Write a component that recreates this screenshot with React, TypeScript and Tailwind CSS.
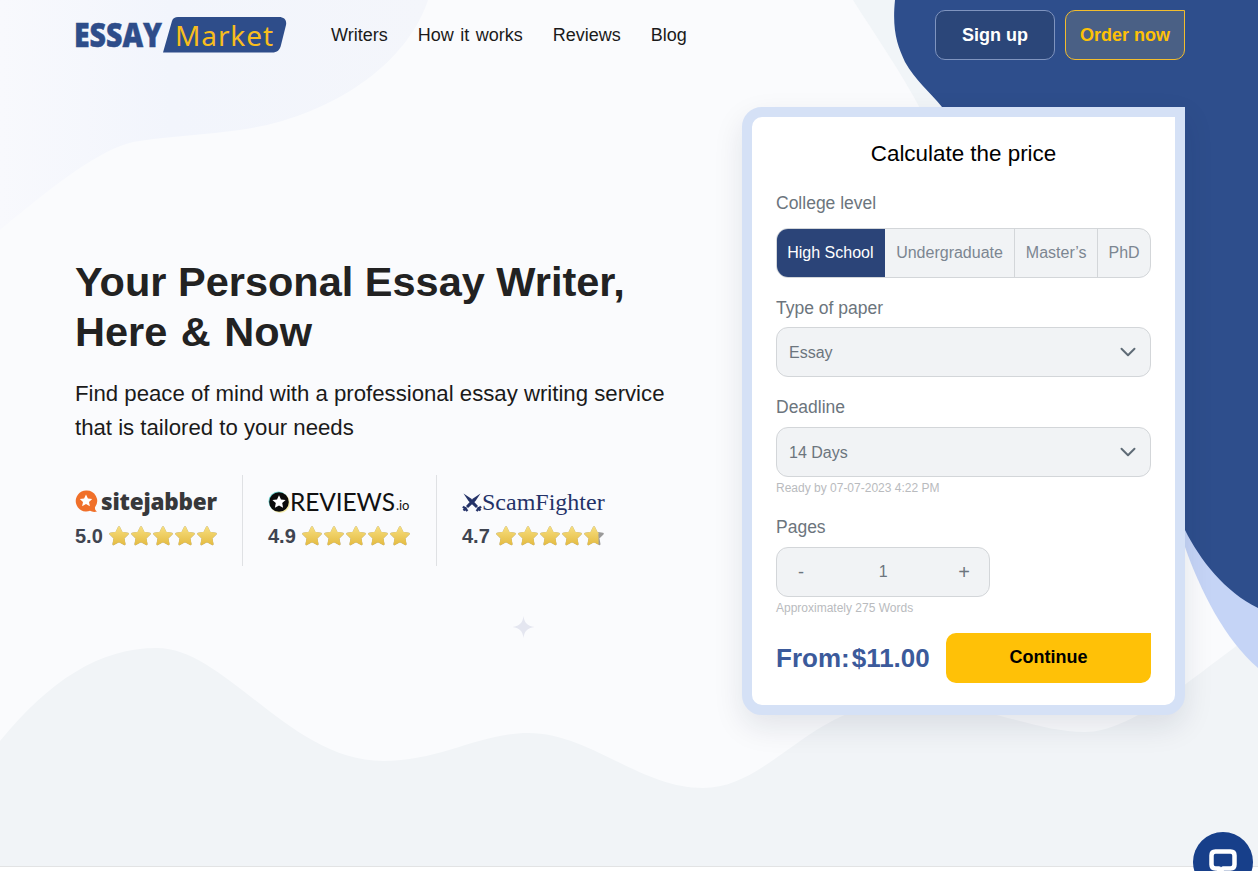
/** Essay Market landing hero with the price calculator card. */
import { useId } from 'react';
import { ChevronDown } from 'lucide-react';

const NAV_LINKS = ['Writers', 'How it works', 'Reviews', 'Blog'];

const LEVELS = [
  { label: 'High School', width: 'w-[109px]', active: true },
  { label: 'Undergraduate', width: 'w-[130px]', active: false },
  { label: 'Master’s', width: 'w-[83px]', active: false },
  { label: 'PhD', width: 'w-[53px]', active: false },
];

function HeroBackground() {
  return (
    <svg className="absolute inset-0" width="1258" height="866" viewBox="0 0 1258 866" fill="none">
      <defs>
        <linearGradient id="corner" x1="0" y1="0" x2="1" y2="0">
          <stop offset="0" stopColor="#f8f9fd" />
          <stop offset="0.4" stopColor="#f2f5fc" />
          <stop offset="1" stopColor="#f4f6fb" />
        </linearGradient>
      </defs>
      <path d="M0 0H428C410 55 350 105 267 125C220 135 170 135 133 142C100 150 60 180 0 230Z" fill="url(#corner)" />
      <path d="M853 0C875 35 900 70 922 112L965 130L900 0Z" fill="#f1f5f8" />
      <path
        d="M0 741C50 680 100 648 157 648C225 648 290 761 383 761C440 761 480 733 528 733C590 733 640 788 703 788C770 788 810 705 900 702C980 700 1030 732 1085 732C1130 732 1190 680 1235 647L1258 625V866H0Z"
        fill="#f1f4f7"
      />
      <path d="M1170 500L1258 600V668C1225 640 1200 590 1185 547Z" fill="#c5d4f6" />
      <path d="M895 0C892 30 897 45 905 62C915 80 930 92 942 107L1130 420C1150 470 1165 500 1185 530C1200 560 1225 592 1258 608V0Z" fill="#2e4e8c" />
      <path d="M523.5 616C524.5 623 527 625.500 534.500 627C527 628.500 524.500 631 523.500 638C522.500 631 520 628.500 512.500 627C520 625.500 522.500 623 523.500 616Z" fill="#e4e6f0" />
    </svg>
  );
}

function Logo() {
  return (
    <svg width="212" height="56" viewBox="0 -9 212 56" className="block overflow-visible">
      <text
        x="-1"
        y="31"
        fill="#2e4d8a"
        stroke="#2e4d8a"
        strokeWidth="0.500"
        fontSize="33"
        fontWeight="800"
        fontFamily="'Open Sans', sans-serif"
        textLength="88"
        lengthAdjust="spacingAndGlyphs"
      >
        ESSAY
      </text>
      <path d="M97 5C98 2 100 1 103 1H204C209 1 212 4 211 9L206 29C205 34 202 36.500 197 36.500H88Z" fill="#2e4d8a" />
      <text x="100" y="30" fill="#f8bd1d" fontSize="28" fontFamily="'Noto Sans', sans-serif" textLength="98" lengthAdjust="spacing">
        Market
      </text>
    </svg>
  );
}

function Star({ fill = 1 }: { fill?: number }) {
  const id = useId();
  const d = 'M11 2.200L13.700 7.800L19.800 8.700L15.400 13L16.500 19.200L11 16.200L5.500 19.200L6.600 13L2.200 8.700L8.300 7.800Z';
  return (
    <svg width="22" height="22" viewBox="0 0 22 22" className="shrink-0">
      <defs>
        <linearGradient id={`${id}g`} x1="0" y1="0" x2="0" y2="1">
          <stop offset="0" stopColor="#f6dd7d" />
          <stop offset="1" stopColor="#e5bd45" />
        </linearGradient>
        <clipPath id={`${id}c`}>
          <rect x="0" y="0" width={22 * fill} height="22" />
        </clipPath>
      </defs>
      <path d={d} fill="#9a9a9a" stroke="#9a9a9a" strokeWidth="2" strokeLinejoin="round" />
      <path d={d} fill={`url(#${id}g)`} stroke={`url(#${id}g)`} strokeWidth="2" strokeLinejoin="round" clipPath={`url(#${id}c)`} />
    </svg>
  );
}

function Rating({ value, last = 1 }: { value: string; last?: number }) {
  return (
    <div className="mt-[5px] flex items-center">
      <span className="mr-[5px] text-[20px] leading-[30px] font-bold text-[#3f4450]">{value}</span>
      {[1, 1, 1, 1, last].map((fill, i) => (
        <Star key={i} fill={fill} />
      ))}
    </div>
  );
}

function SitejabberLogo() {
  return (
    <div className="flex h-[28px] items-center">
      <svg width="24" height="24" viewBox="0 0 24 24" className="mr-[2px] shrink-0">
        <path d="M11 0.500A10.500 10.500 0 1 0 15 20.800C17 22 19.500 22.300 22 21.500C20.300 20.500 19.800 19 20 17.300A10.500 10.500 0 0 0 11 0.500Z" fill="#f0702a" />
        <path d="M11 4.500L12.900 8.500L17.200 9L14 12L14.900 16.300L11 14.100L7.100 16.300L8 12L4.800 9L9.100 8.500Z" fill="#fff" />
      </svg>
      <span className="font-['Open_Sans',sans-serif] text-[22.500px] leading-none font-extrabold tracking-[-0.2px] text-[#37383a]">sitejabber</span>
    </div>
  );
}

function ReviewsLogo() {
  return (
    <div className="flex h-[28px] items-center">
      <svg width="22" height="22" viewBox="0 0 22 22" className="shrink-0">
        <circle cx="10.500" cy="10.500" r="10" fill="#6fd5d0" />
        <circle cx="12" cy="12" r="10" fill="#f6edaa" />
        <circle cx="11" cy="11" r="9.800" fill="#0b0b0b" />
        <path d="M11 4.200L13 8.500L17.600 9L14.200 12.100L15.100 16.700L11 14.400L6.900 16.700L7.800 12.100L4.400 9L9 8.500Z" fill="#fff" />
      </svg>
      <span className="font-['Lato',sans-serif] text-[24.500px] leading-none tracking-[-0.1px] text-[#111]">REVIEWS</span>
      <span className="mt-[7px] ml-[1px] font-['Lato',sans-serif] text-[13px] leading-none text-[#111]">.io</span>
    </div>
  );
}

function ScamFighterLogo() {
  return (
    <div className="flex h-[28px] items-center">
      <svg width="20" height="20" viewBox="0 0 20 20" className="shrink-0" fill="none">
        <path d="M1.500 1.500L9 6.500L16 14L14 16L6.500 9Z" fill="#243268" />
        <path d="M18.500 1.500L11 6.500L4 14L6 16L13.500 9Z" fill="#243268" />
        <path d="M1 14.500L5.500 19M19 14.500L14.500 19M1.500 18.500L4.500 15.500M18.500 18.500L15.500 15.500" stroke="#243268" strokeWidth="2.400" />
      </svg>
      <span className="font-['Liberation_Serif',serif] text-[24px] leading-none text-[#243268]">ScamFighter</span>
    </div>
  );
}

function FieldLabel({ children, className = '' }: { children: string; className?: string }) {
  return <div className={`text-[17.500px] leading-[20px] text-[#6c757d] ${className}`}>{children}</div>;
}

function SelectField({ value }: { value: string }) {
  return (
    <div className="flex h-[50px] items-center justify-between rounded-[12px] border border-[#d3d6d9] bg-[#f1f3f5] pr-[9px] pl-[12px] text-[16px] text-[#6c757d]">
      <span className="pt-[1px]">{value}</span>
      <ChevronDown size={26} strokeWidth={1.800} className="text-[#5f6b76]" />
    </div>
  );
}

function PriceCard() {
  return (
    <div className="h-[608px] w-[443px] rounded-[20px] rounded-tr-none border-[10px] border-[#d5e1f6] bg-white shadow-[0_12px_30px_rgba(20,30,60,0.10)]">
      <div className="px-[24px] pt-[24px]">
        <h2 className="text-center text-[22.400px] leading-[26px] font-normal text-black">Calculate the price</h2>
        <FieldLabel className="mt-[26px]">College level</FieldLabel>
        <div className="mt-[15px] flex h-[50px] overflow-hidden rounded-[12px] border border-[#d3d6d9] bg-[#f1f3f5]">
          {LEVELS.map((level, i) =>
            level.active ? (
              <div key={level.label} className={`-my-px -ml-px flex ${level.width} items-center justify-center bg-[#2b4478] text-[16px] text-white`}>
                {level.label}
              </div>
            ) : (
              <div
                key={level.label}
                className={`flex ${level.width} items-center justify-center text-[16px] text-[#7c8691] ${i > 1 ? 'border-l border-[#d3d6d9]' : ''}`}
              >
                {level.label}
              </div>
            ),
          )}
        </div>
        <FieldLabel className="mt-[20px] mb-[9px]">Type of paper</FieldLabel>
        <SelectField value="Essay" />
        <FieldLabel className="mt-[20px] mb-[10px]">Deadline</FieldLabel>
        <SelectField value="14 Days" />
        <div className="mt-[4px] text-[12px] leading-[14px] text-[#b9bbbe]">Ready by 07-07-2023 4:22 PM</div>
        <FieldLabel className="mt-[22px] mb-[10px]">Pages</FieldLabel>
        <div className="flex h-[50px] w-[214px] items-center justify-between rounded-[12px] border border-[#d3d6d9] bg-[#f1f3f5] pr-[19px] pl-[21px] text-[#6c757d]">
          <span className="text-[18px] leading-none">-</span>
          <span className="mb-[1px] ml-[4px] text-[16px] leading-none">1</span>
          <span className="text-[20px] leading-none">+</span>
        </div>
        <div className="mt-[4px] text-[12px] leading-[14px] text-[#b9bbbe]">Approximately 275 Words</div>
        <div className="mt-[18px] flex h-[50px] items-center justify-between">
          <div className="flex gap-[2px] text-[26px] font-bold text-[#3b5a9b]">
            <span>From:</span>
            <span>$11.00</span>
          </div>
          <button className="h-[50px] w-[205px] rounded-[10px] rounded-tr-none bg-[#ffc107] pb-[2px] text-[18px] font-bold text-black">Continue</button>
        </div>
      </div>
    </div>
  );
}

export default function App() {
  return (
    <div className="relative h-screen overflow-hidden bg-white font-['Liberation_Sans',Arial,sans-serif]">
      <section className="relative h-[867px] overflow-hidden border-b border-[#e2e3e4] bg-[#fafbfd]">
        <HeroBackground />
        <div className="relative">
          <header className="flex h-[70px] items-center justify-between pr-[73px] pl-[75px]">
            <div className="flex items-center">
              <Logo />
              <nav className="ml-[44px] flex gap-[30px] text-[18px] [word-spacing:1.500px] text-[#1a1a1a]">
                {NAV_LINKS.map((link) => (
                  <a key={link}>{link}</a>
                ))}
              </nav>
            </div>
            <div className="flex gap-[10px]">
              <button className="h-[50px] w-[120px] rounded-[10px] border border-[#7f94bf] bg-[#2b4679] text-[18px] font-bold text-white">Sign up</button>
              <button className="h-[50px] w-[120px] rounded-[10px] rounded-tr-none border border-[#f3bd2c] bg-[#4a6085] text-[18px] font-bold text-[#fec107]">
                Order now
              </button>
            </div>
          </header>
          <main className="mt-[37px] flex justify-between pr-[73px] pl-[75px]">
            <div className="w-[620px] pt-[150px]">
              <h1 className="text-[41.500px] leading-[50px] font-bold text-[#222]">
                Your Personal Essay Writer,
                <br />
                Here <span className="mx-[2px]">&amp;</span> Now
              </h1>
              <p className="mt-[20px] text-[22.200px] leading-[34px] text-[#1a1a1a]">
                Find peace of mind with a professional essay writing service
                <br />
                that is tailored to your needs
              </p>
              <div className="mt-[30px] flex h-[91px]">
                <div className="w-[167px] pt-[13px]">
                  <SitejabberLogo />
                  <Rating value="5.0" />
                </div>
                <div className="w-[194px] border-l border-[#dfe1e4] pt-[13px] pl-[25px]">
                  <ReviewsLogo />
                  <Rating value="4.9" />
                </div>
                <div className="border-l border-[#dfe1e4] pt-[13px] pl-[25px]">
                  <ScamFighterLogo />
                  <Rating value="4.7" last={0.7} />
                </div>
              </div>
            </div>
            <PriceCard />
          </main>
        </div>
      </section>
      <button className="absolute top-[832px] left-[1193px] flex h-[60px] w-[60px] items-start justify-center rounded-full bg-[#173f8a] pt-[17px]">
        <svg width="30" height="30" viewBox="0 0 30 30" fill="none">
          <path d="M7.500 2.500H22.500C25 2.500 26.500 4 26.500 6.500V15.500C26.500 18 25 19.500 22.500 19.500H15L11 24V19.500H7.500C5 19.500 3.500 18 3.500 15.500V6.500C3.500 4 5 2.500 7.500 2.500Z" stroke="#fff" strokeWidth="4.500" strokeLinejoin="round" />
        </svg>
      </button>
    </div>
  );
}
